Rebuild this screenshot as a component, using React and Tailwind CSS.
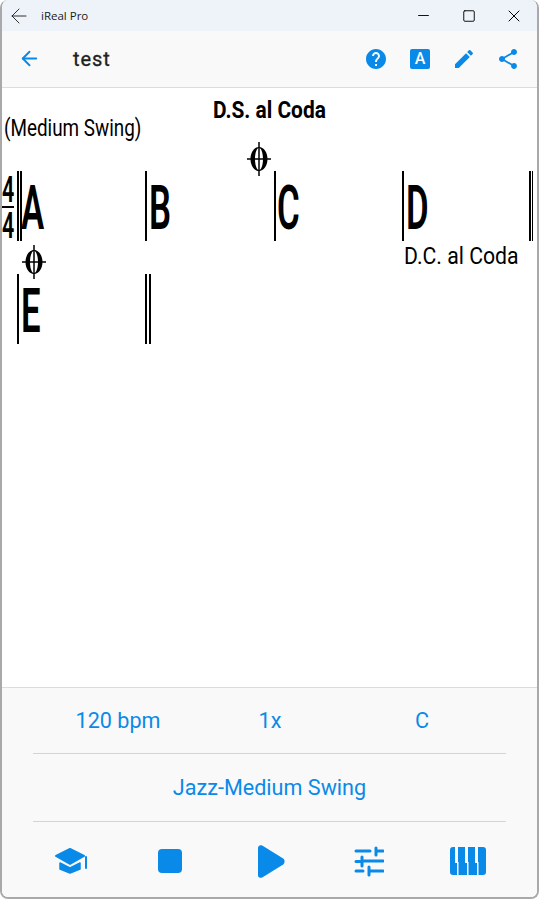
import React from "react";
import { ArrowLeft, Minus, Square, X } from "lucide-react";
import { MdHelp, MdEdit, MdShare } from "react-icons/md";

function Coda({ className }) {
  return (
    <svg className={className} width="24" height="34" viewBox="0 0 24 34">
      <path fillRule="evenodd" d="M12 5c4.700 0 8.500 5.400 8.500 12S16.700 29 12 29 3.500 23.600 3.500 17 7.300 5 12 5zm0 1c-2.200 0-4 4.900-4 11s1.800 11 4 11 4-4.900 4-11-1.800-11-4-11z" />
      <path d="M12 0v34M0 17h24" stroke="#000" strokeWidth="1.500" />
    </svg>
  );
}

function Chord({ name, offset = "left-[2px]" }) {
  return (
    <div className="relative h-[70px] border-l-2 border-black">
      <span className={`absolute ${offset} top-[2px] origin-left scale-x-[0.56] text-[62px] leading-[70px] font-semibold text-black`}>{name}</span>
    </div>
  );
}

function CapIcon() {
  return (
    <svg width="32" height="26" viewBox="0 0 32 26" fill="#0a8ae8" stroke="#0a8ae8" strokeLinejoin="round" strokeLinecap="round">
      <path d="M15 1 29 8 15 16 1 8z" strokeWidth="2" />
      <path d="M5 15v6l10 4 10-4v-6l-10 5z" strokeWidth="1.500" />
      <path d="M31 9v11" strokeWidth="2" />
    </svg>
  );
}

function PlayIcon() {
  return (
    <svg className="ml-[5px]" width="27" height="33" viewBox="0 0 27 33" fill="#0a8ae8">
      <path d="M0 3C0 .8 2.200-.6 4.200.6l21 13c1.800 1.200 1.800 4.600 0 5.800l-21 13C2.200 33.600 0 32.200 0 30z" />
    </svg>
  );
}

function TuneIcon() {
  return (
    <svg width="30" height="31" viewBox="0 0 30 31" fill="none" stroke="#0a8ae8" strokeWidth="3" strokeLinecap="round">
      <path d="M2 5H16M22 2V9M22 5H29" />
      <path d="M2 15.500H6M8 11V20M8 15H29" />
      <path d="M2 25H9M15 21V29M15 25H29" />
    </svg>
  );
}

function PianoIcon() {
  return (
    <svg width="36" height="28" viewBox="0 0 36 28">
      <rect width="36" height="28" rx="3" fill="#0a8ae8" />
      <path d="M5 0h3v16H5zM15 0h3v16h-3zM25 0h3v16h-3z" fill="#f9f9f9" />
      <path d="M7 15h1.500v13H7zM17 15h1.500v13H17zM27 15h1.500v13H27z" fill="#f9f9f9" />
    </svg>
  );
}

export default function App() {
  return (
    <div className="relative h-[899px] w-[539px] overflow-hidden bg-white font-['Roboto',sans-serif]">
      <div className="flex h-full flex-col overflow-hidden rounded-lg border-x-2 border-b-2 border-[#a9a9a9] bg-white">
        {/* window title bar */}
        <div className="flex h-[31px] shrink-0 items-center bg-[#eef3fa] text-[#1a1a1a]">
          <ArrowLeft size={24} strokeWidth={0.9} className="ml-[5px]" />
          <span className="ml-[10px] font-['Open_Sans',sans-serif] text-[11.5px]">iReal Pro</span>
          <div className="ml-auto flex items-center text-black">
            <div className="flex w-[45px] justify-center"><Minus size={17} strokeWidth={1.3} /></div>
            <div className="flex w-[45px] justify-center"><Square size={14} strokeWidth={1.6} /></div>
            <div className="flex w-[46px] justify-center"><X size={20} strokeWidth={1.2} /></div>
          </div>
        </div>

        {/* app header */}
        <div className="flex h-[57px] shrink-0 items-center border-b border-[#dcdcdc] bg-[#f9f9f9] pb-[1px] text-[#0a8ae8]">
          <div className="ml-[5px] flex w-11 justify-center"><ArrowLeft size={23} strokeWidth={2} /></div>
          <span className="ml-[22px] text-[20px] tracking-[0.9px] text-[#212121] [-webkit-text-stroke:0.3px_#212121]">test</span>
          <div className="ml-auto mr-[7px] flex items-center">
            <div className="flex w-11 justify-center"><MdHelp size={24} /></div>
            <div className="flex w-11 justify-center">
              <div className="flex h-5 w-5 items-center justify-center rounded-[2px] bg-[#0a8ae8] text-[16px] leading-none font-medium text-white">A</div>
            </div>
            <div className="flex w-11 justify-center"><MdEdit size={24} /></div>
            <div className="flex w-11 justify-center"><MdShare size={24} /></div>
          </div>
        </div>

        {/* chart */}
        <div className="relative flex-1 bg-white pt-[83px] text-black">
          <div className="absolute left-[211px] top-[7px] origin-left scale-x-[0.87] text-[24px] leading-[30px] font-bold whitespace-nowrap">D.S. al Coda</div>
          <div className="absolute left-[2px] top-[26px] origin-left scale-x-[0.82] text-[23px] leading-[30px] whitespace-nowrap">(Medium Swing)</div>
          <Coda className="absolute left-[245px] top-[54px]" />
          <Coda className="absolute left-[20px] top-[157px]" />
          <div className="absolute left-[402px] top-[153px] origin-left scale-x-[0.885] text-[24px] leading-[30px] whitespace-nowrap">D.C. al Coda</div>

          <div className="relative ml-[15px] grid h-[70px] w-[516px] grid-cols-[128px_129px_128px_131px]">
            <div className="absolute left-[-15px] top-0 h-[70px] w-[13px]">
              <span className="absolute left-0 top-[4px] origin-left scale-x-[0.58] text-[37px] leading-[30px] font-semibold">4</span>
              <div className="absolute left-0 top-[35px] h-[2px] w-[12px] bg-black" />
              <span className="absolute left-0 top-[40px] origin-left scale-x-[0.58] text-[37px] leading-[30px] font-semibold">4</span>
            </div>
            <div className="relative h-[70px] border-l-2 border-black">
              <div className="absolute left-[1px] top-0 h-[70px] w-[2px] bg-black" />
              <span className="absolute left-[2px] top-[2px] origin-left scale-x-[0.56] text-[62px] leading-[70px] font-semibold">A</span>
            </div>
            <Chord name="B" />
            <Chord name="C" offset="left-[1px]" />
            <div className="relative h-[70px] border-r-[4px] border-l-2 border-black">
              <span className="absolute left-[2px] top-[2px] origin-left scale-x-[0.56] text-[62px] leading-[70px] font-semibold">D</span>
              <div className="absolute right-[-3px] top-0 h-[70px] w-[1.5px] bg-white" />
            </div>
          </div>

          <div className="mt-[33px] ml-[15px] grid h-[70px] w-[140px] grid-cols-[128px_12px]">
            <Chord name="E" />
            <div className="flex h-[70px] gap-[1.5px]">
              <div className="h-full w-[2px] bg-black" />
              <div className="h-full w-[2px] bg-black" />
            </div>
          </div>
        </div>

        {/* bottom controls */}
        <div className="flex h-[210px] shrink-0 flex-col border-t border-[#dcdcdc] bg-[#f9f9f9] text-[21.6px] text-[#0a8ae8]">
          <div className="mx-[31px] grid h-[66px] shrink-0 grid-cols-3 items-center border-b border-[#d4d4d4] pt-[2px] pr-[8px] pl-[9px] text-center">
            <span>120 bpm</span>
            <span>1x</span>
            <span>C</span>
          </div>
          <div className="mx-[31px] flex h-[68px] shrink-0 items-center justify-center border-b border-[#d4d4d4] pt-[2px]">Jazz-Medium Swing</div>
          <div className="mx-[19px] grid flex-1 grid-cols-5 items-center justify-items-center pt-[3px]">
            <CapIcon />
            <div className="h-6 w-6 rounded-[4px] bg-[#0a8ae8]" />
            <PlayIcon />
            <TuneIcon />
            <PianoIcon />
          </div>
        </div>
      </div>
    </div>
  );
}
